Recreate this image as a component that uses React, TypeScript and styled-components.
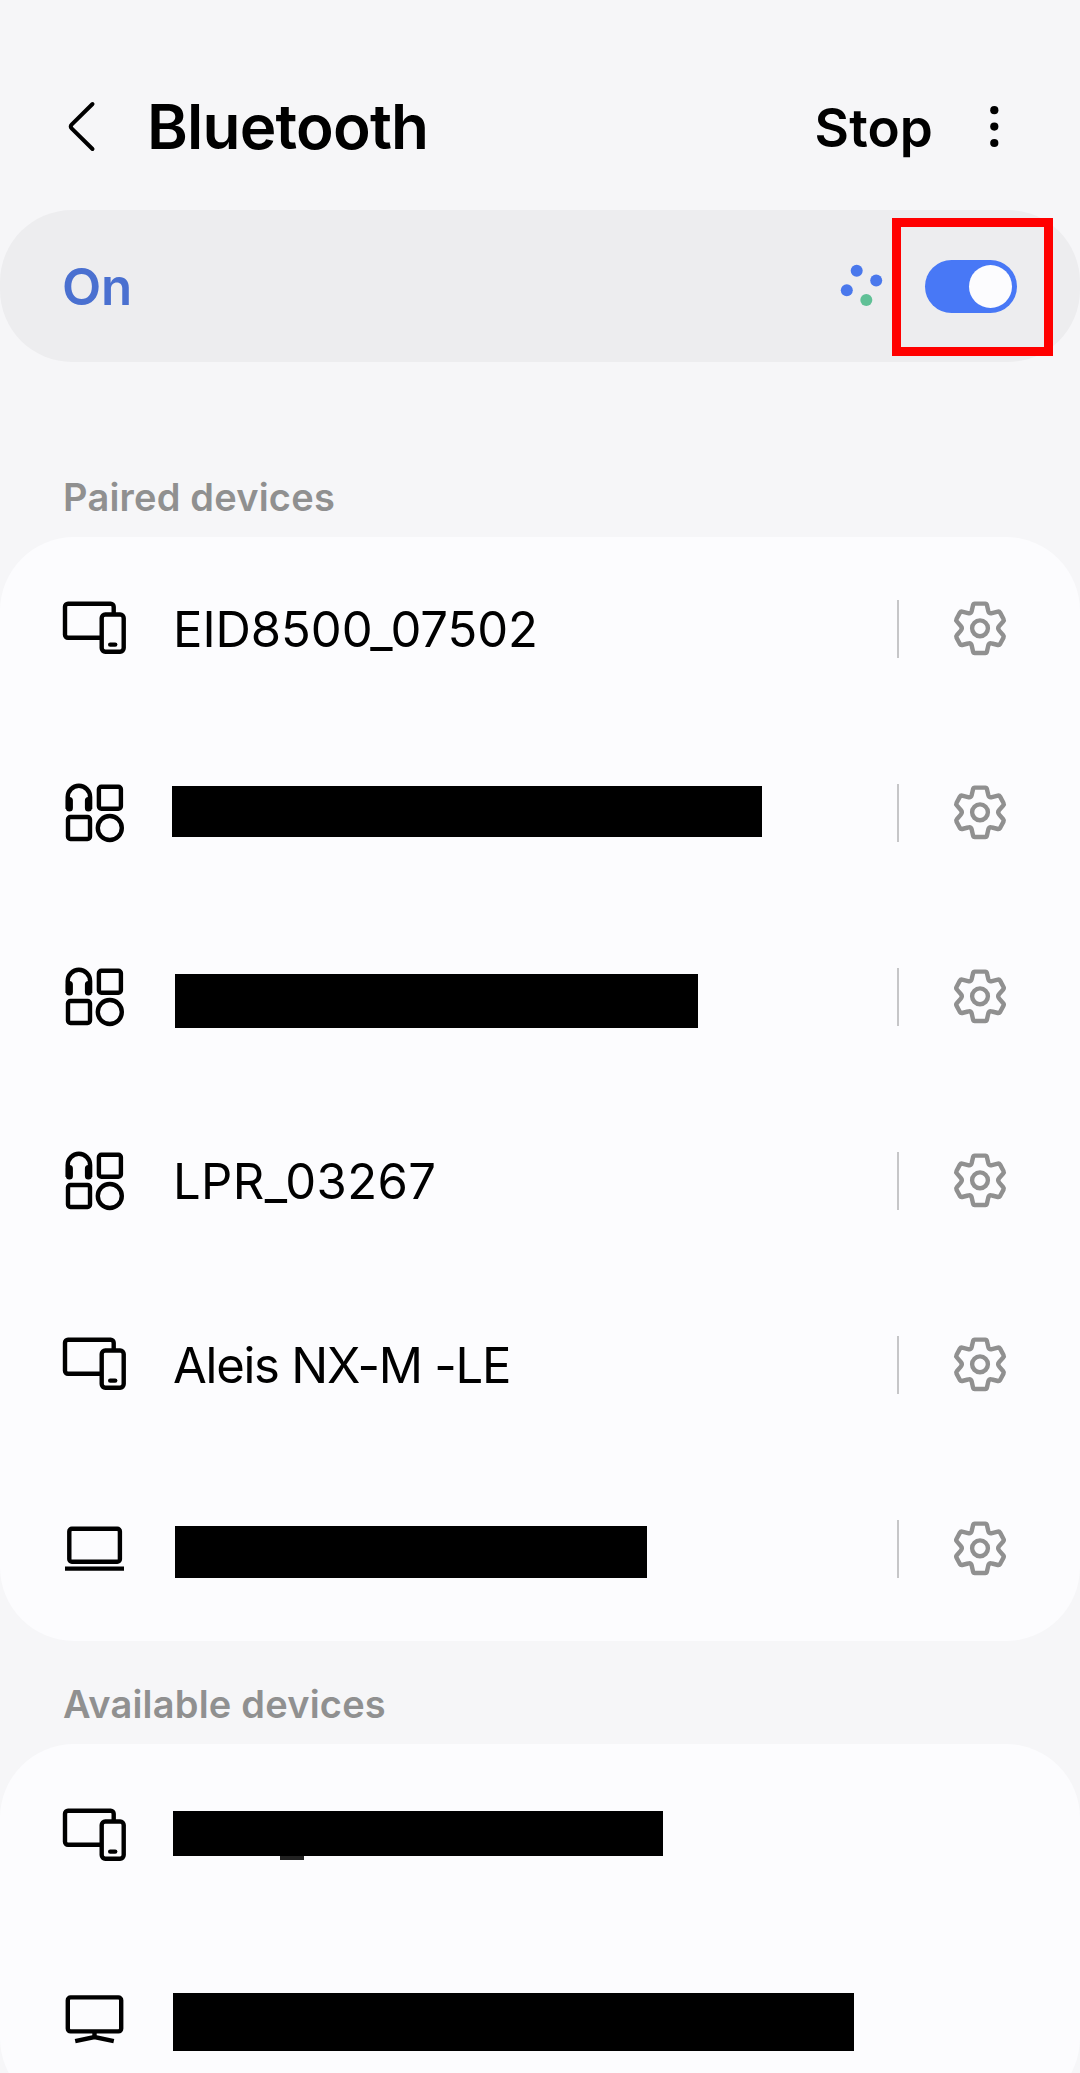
import React from "react";
import styled, { createGlobalStyle } from "styled-components";

const GlobalStyle = createGlobalStyle`
  *, *::before, *::after { box-sizing: border-box; }
  body { margin: 0; background: #f6f6f8; font-family: Inter, "Open Sans", sans-serif; color: #000; }
  svg { display: block; flex: none; }
`;

const Screen = styled.div`
  width: 1080px;
  height: 2073px;
  overflow: hidden;
  background: #f6f6f8;
  display: flex;
  flex-direction: column;
`;

const Header = styled.header`
  flex: none;
  height: 210px;
  padding: 44px 71px 0 66px;
  display: flex;
  align-items: center;
`;

const IconButton = styled.button`
  border: 0;
  padding: 0;
  background: none;
  color: inherit;
`;

const Title = styled.h1`
  margin: 0 auto 0 49px;
  font-size: 62px;
  line-height: 76px;
  font-weight: 600;
  letter-spacing: -0.8px;
`;

const StopButton = styled.button`
  border: 0;
  padding: 0;
  margin: 1px 46px 0 0;
  background: none;
  color: inherit;
  font: 600 53px/64px Inter, sans-serif;
  letter-spacing: 0.1px;
`;

const MasterSwitch = styled.section`
  flex: none;
  height: 152px;
  padding: 0 27px 0 62px;
  border-radius: 72px;
  background: #ededef;
  display: flex;
  align-items: center;
`;

const SwitchLabel = styled.span`
  margin: 1px auto 0 0;
  font-size: 51px;
  line-height: 60px;
  font-weight: 600;
  color: #4a70d0;
  letter-spacing: -0.3px;
`;

const Highlight = styled.div`
  width: 161px;
  height: 138px;
  margin: 1px 0 0 9px;
  border: 9px solid #ff0000;
  display: flex;
  align-items: center;
  justify-content: center;
`;

const Toggle = styled.div`
  width: 92px;
  height: 53px;
  margin-left: -4px;
  padding: 5px;
  border-radius: 27px;
  background: #4878f6;
  display: flex;
  justify-content: flex-end;
`;

const Knob = styled.div`
  width: 43px;
  height: 43px;
  border-radius: 50%;
  background: #fcfcfe;
`;

const SectionTitle = styled.h2<{ $height: number }>`
  flex: none;
  height: ${(p) => p.$height}px;
  margin: 0;
  padding: 0 63px 17px;
  display: flex;
  align-items: flex-end;
  font-size: 38px;
  line-height: 46px;
  font-weight: 600;
  color: #909090;
  letter-spacing: 0.2px;
`;

const Card = styled.ul`
  flex: none;
  margin: 0;
  padding: 0;
  list-style: none;
  border-radius: 74px;
  background: #fcfcfe;
`;

const Row = styled.li`
  height: 184px;
  padding: 0 72px 0 62px;
  display: flex;
  align-items: center;
`;

const IconSlot = styled.div`
  margin-top: -2px;
`;

const Name = styled.span<{ $tracking: number }>`
  margin: 1px 0 0 47px;
  font-size: 49px;
  line-height: 60px;
  font-weight: 400;
  letter-spacing: ${(p) => p.$tracking}px;
  white-space: pre;
`;

const Redaction = styled.div<{ $left: number; $width: number; $height: number; $shift: number }>`
  width: ${(p) => p.$width}px;
  height: ${(p) => p.$height}px;
  margin-left: ${(p) => p.$left - 126}px;
  margin-top: ${(p) => p.$shift * 2}px;
  background: #000;
`;

const Residue = styled.div`
  width: 24px;
  height: 4px;
  margin: 45px 0 0 107px;
  background: #222;
`;

const Actions = styled.div`
  margin-left: auto;
  display: flex;
  align-items: center;
  gap: 53px;
`;

const Divider = styled.div`
  width: 2px;
  height: 58px;
  background: #c6c6c8;
`;

type Kind = "devices" | "accessory" | "laptop" | "tv";

const DeviceIcon = ({ kind }: { kind: Kind }) => (
  <svg width="64" height="64" viewBox="0 0 64 64" fill="none" stroke="#000" strokeWidth="4.4">
    {kind === "devices" && (
      <>
        <path d="M39 41.7H6a3 3 0 0 1-3-3V10.7a3 3 0 0 1 3-3H48.7a3 3 0 0 1 3 3V18" />
        <rect x="39.7" y="18.5" width="22" height="37.2" rx="3.6" />
        <path d="M48.2 48.6h5" strokeLinecap="round" />
      </>
    )}
    {kind === "accessory" && (
      <>
        <path d="M5.7 29V17a11.2 11.2 0 0 1 22.4 0V29" />
        <path d="M7.4 20.5V28M26.4 20.5V28" strokeWidth="7" strokeLinecap="round" />
        <rect x="36.9" y="6.8" width="22" height="22" rx="2.5" />
        <rect x="6" y="37" width="22" height="22" rx="2.5" />
        <circle cx="47.8" cy="48" r="12" />
      </>
    )}
    {kind === "laptop" && (
      <>
        <rect x="7.3" y="12.8" width="50.6" height="33" rx="2.6" />
        <path d="M3 52.6h59" />
      </>
    )}
    {kind === "tv" && (
      <>
        <rect x="5.8" y="10.4" width="53.4" height="34" rx="2.8" />
        <path d="M32.5 44.5v5M13.2 54.2l19.3-4.2 19.3 4.2" />
      </>
    )}
  </svg>
);

const GearIcon = () => (
  <svg width="56" height="56" viewBox="-28 -27.3 56 56" fill="none" stroke="#909090" strokeWidth="4.4" strokeLinejoin="round">
    <path d="M-5.2-24.7H5.2Q6.6-24.7 6.9-23.4L8.3-17.2Q9.2-14.4 12-15.2L17.9-16.7Q19.3-17 20.1-15.7L23.5-9.3Q24.2-8 23.2-6.9L19.2-2.3Q17.2 0 19.2 2.3L23.2 6.9Q24.2 8 23.5 9.3L20.1 15.7Q19.3 17 17.9 16.7L12 15.2Q9.2 14.4 8.3 17.2L6.9 23.4Q6.6 24.7 5.2 24.7H-5.2Q-6.6 24.7-6.9 23.4L-8.3 17.2Q-9.2 14.4-12 15.2L-17.9 16.7Q-19.3 17-20.1 15.7L-23.5 9.3Q-24.2 8-23.2 6.9L-19.2 2.3Q-17.2 0-19.2-2.3L-23.2-6.9Q-24.2-8-23.5-9.3L-20.1-15.7Q-19.3-17-17.9-16.7L-12-15.2Q-9.2-14.4-8.3-17.2L-6.9-23.4Q-6.6-24.7-5.2-24.7Z" />
    <circle r="7.9" />
  </svg>
);

interface Device {
  kind: Kind;
  name?: string;
  tracking?: number;
  bar?: { left: number; width: number; height: number; shift: number; residue?: boolean };
}

const paired: Device[] = [
  { kind: "devices", name: "EID8500_07502", tracking: -0.05 },
  { kind: "accessory", bar: { left: 172, width: 590, height: 51, shift: -1.5 } },
  { kind: "accessory", bar: { left: 175, width: 523, height: 54, shift: 4 } },
  { kind: "accessory", name: "LPR_03267", tracking: 0.4 },
  { kind: "devices", name: "Aleis NX-M -LE", tracking: -1.25 },
  { kind: "laptop", bar: { left: 175, width: 472, height: 52, shift: 3 } },
];

const available: Device[] = [
  { kind: "devices", bar: { left: 173, width: 490, height: 45, shift: -2.5, residue: true } },
  { kind: "tv", bar: { left: 173, width: 681, height: 58, shift: 2 } },
];

const DeviceRow = ({ device, configurable }: { device: Device; configurable?: boolean }) => (
  <Row>
    <IconSlot>
      <DeviceIcon kind={device.kind} />
    </IconSlot>
    {device.name && <Name $tracking={device.tracking ?? 0}>{device.name}</Name>}
    {device.bar && (
      <Redaction
        $left={device.bar.left}
        $width={device.bar.width}
        $height={device.bar.height}
        $shift={device.bar.shift}
      >
        {device.bar.residue && <Residue />}
      </Redaction>
    )}
    {configurable && (
      <Actions>
        <Divider />
        <IconButton aria-label="Device settings">
          <GearIcon />
        </IconButton>
      </Actions>
    )}
  </Row>
);

export default function App() {
  return (
    <>
      <GlobalStyle />
      <Screen>
        <Header>
          <IconButton aria-label="Back">
            <svg width="32" height="52" viewBox="0 0 32 52" fill="none" stroke="#000" strokeWidth="4" strokeLinecap="round" strokeLinejoin="round">
              <path d="M26.5 3L5.6 23.7Q3.8 25.5 5.6 27.3L26.5 48" />
            </svg>
          </IconButton>
          <Title>Bluetooth</Title>
          <StopButton>Stop</StopButton>
          <IconButton aria-label="More options">
            <svg width="30" height="48" viewBox="0 0 30 48">
              <circle cx="15.3" cy="7.2" r="4.1" />
              <circle cx="15.3" cy="23.6" r="4.1" />
              <circle cx="15.3" cy="40" r="4.1" />
            </svg>
          </IconButton>
        </Header>
        <MasterSwitch>
          <SwitchLabel>On</SwitchLabel>
          <svg width="44" height="44" viewBox="0 0 44 44" fill="#4a78ec">
            <circle cx="17.7" cy="6.7" r="6" />
            <circle cx="37.2" cy="16.6" r="6" />
            <circle cx="7.8" cy="26.3" r="6" />
            <circle cx="27.3" cy="36.1" r="6" fill="#60c096" />
          </svg>
          <Highlight>
            <Toggle>
              <Knob />
            </Toggle>
          </Highlight>
        </MasterSwitch>
        <SectionTitle $height={175}>Paired devices</SectionTitle>
        <Card>
          {paired.map((device, i) => (
            <DeviceRow key={i} device={device} configurable />
          ))}
        </Card>
        <SectionTitle $height={103}>Available devices</SectionTitle>
        <Card>
          {available.map((device, i) => (
            <DeviceRow key={i} device={device} />
          ))}
        </Card>
      </Screen>
    </>
  );
}
